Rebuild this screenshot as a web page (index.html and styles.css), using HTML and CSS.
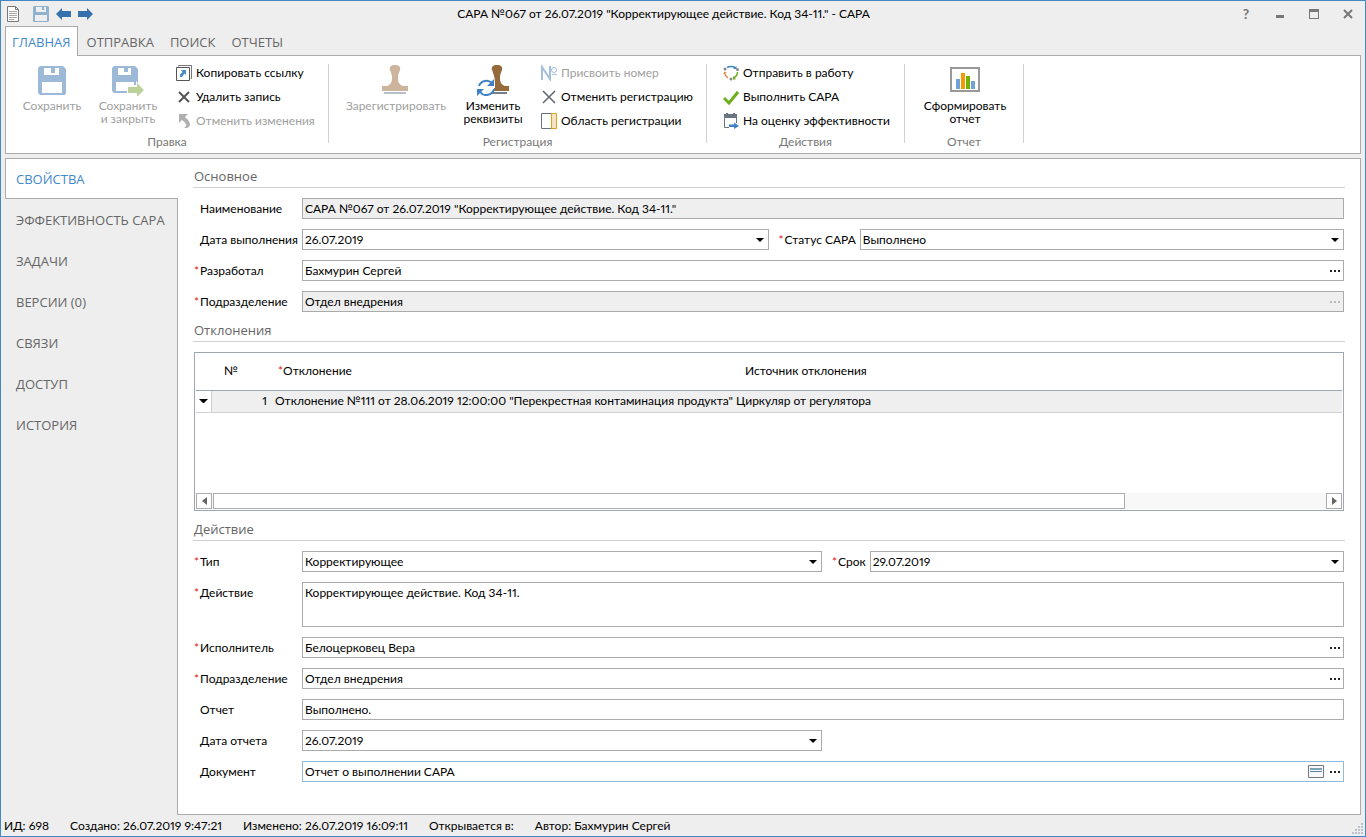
FILE: index.html
```html
<!DOCTYPE html>
<html lang="ru">
<head>
  <meta charset="UTF-8" />
  <meta name="viewport" content="width=device-width, initial-scale=1.0"/>
  <title>САРА №067 от 26.07.2019</title>
  <link rel="stylesheet" href="styles.css">
</head>
<body>
  <header class="titlebar">
    <div class="quick">
      <svg class="doc-icon" width="14" height="18" viewBox="0 0 14 18"><path d="M1.500 1.500h8l3 3v12h-11z" fill="#fff" stroke="#777"/><path d="M9.500 1.500v3h3" fill="none" stroke="#777"/><path d="M3 6.500h8M3 8.500h8M3 10.500h8M3 12.500h8M3 14.500h5" stroke="#aaa"/></svg>
      <button aria-label="Сохранить"><svg width="16" height="16" viewBox="0 0 16 16"><path d="M0 1l1-1h14l1 1v14l-1 1H1l-1-1z" fill="#8fb2d1"/><path d="M3 1h10v5H3zM2 9h12v6H2z" fill="#eee"/><path d="M9 1h2v3H9z" fill="#8fb2d1"/></svg></button>
      <button aria-label="Назад"><svg width="15" height="12" viewBox="0 0 15 12"><path d="M0 6l6-6v3h9v6H6v3z" fill="#3572ab"/></svg></button>
      <button aria-label="Вперед"><svg width="15" height="12" viewBox="0 0 15 12"><path d="M15 6L9 0v3H0v6h9v3z" fill="#3572ab"/></svg></button>
    </div>
    <h1>САРА №067 от 26.07.2019 "Корректирующее действие. Код 34-11." - САРА</h1>
    <div class="window-buttons">
      <button class="help">?</button>
      <button aria-label="Свернуть"><svg width="10" height="10"><path d="M1 6h8v3H1z" fill="#777"/></svg></button>
      <button aria-label="Развернуть"><svg width="10" height="10"><path d="M0 0h10v10H0zM1 3v6h8V3z" fill="#777" fill-rule="evenodd"/></svg></button>
      <button aria-label="Закрыть"><svg width="10" height="10"><path d="M1 1l8 8M9 1L1 9" stroke="#777" stroke-width="2"/></svg></button>
    </div>
  </header>

  <nav class="tabs">
    <a href="#" class="active">ГЛАВНАЯ</a>
    <a href="#">ОТПРАВКА</a>
    <a href="#">ПОИСК</a>
    <a href="#">ОТЧЕТЫ</a>
  </nav>

  <div class="ribbon">
    <section class="group group-edit">
      <div class="tools">
        <button class="big" disabled>
          <svg width="30" height="32" viewBox="0 0 30 32"><path d="M1 4l2-2h23l3 3v24l-1 2H3l-2-2z" fill="#9cbad8"/><path d="M7 4h15v7H7zM5 18h20v11H5z" fill="#fff"/><path d="M14 4h4v5h-4z" fill="#9cbad8"/></svg>
          <span>Сохранить</span>
        </button>
        <button class="big" disabled>
          <svg width="34" height="32" viewBox="0 0 34 32"><path d="M1 4l2-2h21l3 3v24H3l-2-2z" fill="#9cbad8"/><path d="M7 4h13v7H7zM5 18h18v9H5z" fill="#fff"/><path d="M13 4h4v4h-4z" fill="#9cbad8"/><path d="M16 21h9v-4l9 9-9 7v-3h-9z" fill="#fff"/><path d="M17 23h9v-4l7 7-7 7v-4h-9z" fill="#bdd19b"/></svg>
          <span>Сохранить<br>и закрыть</span>
        </button>
        <div class="list">
          <button><svg width="16" height="16" viewBox="0 0 16 16"><path d="M2.500 1.500V.5h13v13h-1" fill="none" stroke="#777"/><path d="M.5 2.500h13v13H.5z" fill="#fff" stroke="#555"/><path d="M5 5h5v5L8.500 8.500 6 12H4V9.500L6.500 7z" fill="#4a8bc4"/></svg>Копировать ссылку</button>
          <button><svg width="16" height="16" viewBox="0 0 16 16"><path d="M3 3l10 10M13 3L3 13" stroke="#555" stroke-width="2"/></svg>Удалить запись</button>
          <button disabled><svg width="16" height="16" viewBox="0 0 16 16"><path d="M3 1h9L9 4q5 4 5 8-1 3-4 3H8q3-2 2-4-1-2-4-4l-3 3z" fill="#b0b0b0"/></svg>Отменить изменения</button>
        </div>
      </div>
      <h2>Правка</h2>
    </section>

    <section class="group group-reg">
      <div class="tools">
        <button class="big wide" disabled>
          <svg width="30" height="32" viewBox="0 0 30 32"><path d="M14 1c4 0 6 2 5 5-1 3-2 4-2 8 0 5 2 7 5 8h5v5H1v-5h5c3-1 5-3 5-8 0-4-1-5-2-8-1-3 1-5 5-5z" fill="#cdb49c"/><path d="M3 28h22v2H3z" fill="#b9bfc5"/></svg>
          <span>Зарегистрировать</span>
        </button>
        <button class="big">
          <svg width="34" height="32" viewBox="0 0 34 32"><path d="M21 1c4 0 6 2 5 5-1 3-2 4-2 8 0 5 2 7 5 8h4v5H18v-9c1-2 1-3 0-6s-1-4-2-6c-1-3 1-5 5-5z" fill="#956a3c"/><path d="M16 28h15v2H16z" fill="#75808d"/><path d="M1 22a9 9 0 0 1 16-4l2-2v8h-8l2-3a6 6 0 0 0-8 2M18 23a9 9 0 0 1-16 5l-1 3v-8h8l-3 3a6 6 0 0 0 9-2z" fill="#fff"/><path d="M3 22a8 8 0 0 1 13-3M18 25a8 8 0 0 1-14 3" fill="none" stroke="#3d82c4" stroke-width="2"/><path d="M18 15v7h-7zM1 32v-7h7z" fill="#3d82c4"/></svg>
          <span>Изменить<br>реквизиты</span>
        </button>
        <div class="list">
          <button disabled><svg width="16" height="16" viewBox="0 0 16 16"><path d="M1 15V2l8 12V1" fill="none" stroke="#a3bfdb" stroke-width="2"/><circle cx="13" cy="5" r="2.500" fill="none" stroke="#a3bfdb"/><path d="M11 9.500h5" stroke="#a3bfdb"/></svg>Присвоить номер</button>
          <button><svg width="16" height="16" viewBox="0 0 16 16"><path d="M2 2l12 12M14 2L2 14" stroke="#5c6670" stroke-width="1.500"/></svg>Отменить регистрацию</button>
          <button><svg width="16" height="16" viewBox="0 0 16 16"><path d="M.5.5h10v15H.5z" fill="#fff" stroke="#687380"/><path d="M10.500.5h5v15h-5z" fill="#f4e3c4" stroke="#d9a520"/></svg>Область регистрации</button>
        </div>
      </div>
      <h2>Регистрация</h2>
    </section>

    <section class="group group-actions">
      <div class="tools">
        <div class="list">
          <button><svg width="16" height="16" viewBox="0 0 16 16"><path d="M4 2.500q4-2 8 0" fill="none" stroke="#3d82c4" stroke-width="1.500"/><path d="M13.500 1v3H10z" fill="#3d82c4"/><path d="M14.500 7q0 4-4 6" fill="none" stroke="#6bac1e" stroke-width="1.500"/><path d="M10 11v3.500h3z" fill="#6bac1e"/><path d="M5 13q-3-2-3.500-5" fill="none" stroke="#e08a4a" stroke-width="1.500"/><path d="M0 9l1.500-2.500L4 8z" fill="#e08a4a"/><circle cx="2" cy="4" r="1.500" fill="#888"/><circle cx="14.500" cy="4.500" r="1.500" fill="#888"/><circle cx="8" cy="14" r="1.500" fill="#888"/></svg>Отправить в работу</button>
          <button><svg width="16" height="16" viewBox="0 0 16 16"><path d="M1 9l5 5L15 3" fill="none" stroke="#6fae1f" stroke-width="3"/></svg>Выполнить САРА</button>
          <button><svg width="16" height="16" viewBox="0 0 16 16"><path d="M1.500 2v12.500H6M13.500 2v8" fill="none" stroke="#6b7580"/><path d="M1 1h2V0h2v1h5V0h2v1h2v4H1z" fill="#6b7580"/><path d="M6 11.500h5V9.500l5 3.500-5 3v-2H6z" fill="#3d82c4"/></svg>На оценку эффективности</button>
        </div>
      </div>
      <h2>Действия</h2>
    </section>

    <section class="group group-report">
      <div class="tools">
        <button class="big wide">
          <svg width="32" height="32" viewBox="0 0 32 32"><path d="M2 4h28v23H2z" fill="#fff" stroke="#999" stroke-width="2"/><path d="M7 15h4v10H7zM22 17h4v8h-4z" fill="#6fa5d6"/><path d="M12 9h4v16h-4z" fill="#f59a00"/><path d="M17 12h4v13h-4z" fill="#73b000"/></svg>
          <span>Сформировать<br>отчет</span>
        </button>
      </div>
      <h2>Отчет</h2>
    </section>
  </div>

  <div class="workspace">
    <nav class="side">
      <a href="#" class="active">СВОЙСТВА</a>
      <a href="#">ЭФФЕКТИВНОСТЬ САРА</a>
      <a href="#">ЗАДАЧИ</a>
      <a href="#">ВЕРСИИ (0)</a>
      <a href="#">СВЯЗИ</a>
      <a href="#">ДОСТУП</a>
      <a href="#">ИСТОРИЯ</a>
    </nav>

    <main class="content">
      <h3>Основное</h3>
      <div class="row">
        <label for="name"><i></i>Наименование</label>
        <div class="field readonly"><input id="name" type="text" value='САРА №067 от 26.07.2019 "Корректирующее действие. Код 34-11."' readonly></div>
      </div>
      <div class="row">
        <label for="doneDate"><i></i>Дата выполнения</label>
        <div class="field date"><select id="doneDate"><option>26.07.2019</option></select></div>
        <label for="status" class="second"><i>*</i>Статус САРА</label>
        <div class="field"><select id="status"><option>Выполнено</option></select></div>
      </div>
      <div class="row">
        <label for="author"><i>*</i>Разработал</label>
        <div class="field"><input id="author" type="text" value="Бахмурин Сергей"><button class="dots" aria-label="Выбрать"></button></div>
      </div>
      <div class="row">
        <label for="dept"><i>*</i>Подразделение</label>
        <div class="field readonly"><input id="dept" type="text" value="Отдел внедрения" readonly><button class="dots" aria-label="Выбрать" disabled></button></div>
      </div>

      <h3>Отклонения</h3>
      <div class="grid">
        <table>
          <thead>
            <tr><th class="mark"></th><th class="num">№</th><th class="deviation"><i>*</i>Отклонение</th><th>Источник отклонения</th></tr>
          </thead>
          <tbody>
            <tr><td class="mark"><span class="caret"></span></td><td class="num">1</td><td>Отклонение №111 от 28.06.2019 12:00:00 "Перекрестная контаминация продукта"</td><td>Циркуляр от регулятора</td></tr>
          </tbody>
        </table>
        <div class="scrollbar">
          <button aria-label="Влево"><svg width="5" height="8"><path d="M5 0v8L0 4z" fill="#666"/></svg></button>
          <div class="track"><div class="thumb"></div></div>
          <button aria-label="Вправо"><svg width="5" height="8"><path d="M0 0v8l5-4z" fill="#666"/></svg></button>
        </div>
      </div>

      <h3>Действие</h3>
      <div class="row">
        <label for="type"><i>*</i>Тип</label>
        <div class="field half"><select id="type"><option>Корректирующее</option></select></div>
        <label for="term" class="second"><i>*</i>Срок</label>
        <div class="field"><select id="term"><option>29.07.2019</option></select></div>
      </div>
      <div class="row">
        <label for="action"><i>*</i>Действие</label>
        <div class="field tall"><textarea id="action">Корректирующее действие. Код 34-11.</textarea></div>
      </div>
      <div class="row">
        <label for="performer"><i>*</i>Исполнитель</label>
        <div class="field"><input id="performer" type="text" value="Белоцерковец Вера"><button class="dots" aria-label="Выбрать"></button></div>
      </div>
      <div class="row">
        <label for="performerDept"><i>*</i>Подразделение</label>
        <div class="field"><input id="performerDept" type="text" value="Отдел внедрения"><button class="dots" aria-label="Выбрать"></button></div>
      </div>
      <div class="row">
        <label for="report"><i></i>Отчет</label>
        <div class="field"><input id="report" type="text" value="Выполнено."></div>
      </div>
      <div class="row">
        <label for="reportDate"><i></i>Дата отчета</label>
        <div class="field half"><select id="reportDate"><option>26.07.2019</option></select></div>
      </div>
      <div class="row">
        <label for="document"><i></i>Документ</label>
        <div class="field focused">
          <input id="document" type="text" value="Отчет о выполнении САРА">
          <button class="card" aria-label="Открыть карточку"><svg width="16" height="13" viewBox="0 0 16 13"><path d="M.5.5h15v12H.5z" fill="#f8f8ff" stroke="#777"/><path d="M2 3h12v2H2z" fill="#78a5b5"/><path d="M2 6h12v1H2z" fill="#6080a5"/></svg></button>
          <button class="dots" aria-label="Выбрать"></button>
        </div>
      </div>
    </main>
  </div>

  <footer class="status">
    <span>ИД: 698</span>
    <span>Создано: 26.07.2019 9:47:21</span>
    <span>Изменено: 26.07.2019 16:09:11</span>
    <span>Открывается в:</span>
    <span>Автор: Бахмурин Сергей</span>
    <svg class="grip" width="12" height="12"><path d="M9 0h2v2H9zM6 3h2v2H6zM9 3h2v2H9zM3 6h2v2H3zM6 6h2v2H6zM9 6h2v2H9zM0 9h2v2H0zM3 9h2v2H3zM6 9h2v2H6zM9 9h2v2H9z" fill="#bcc3d0"/></svg>
  </footer>
</body>
</html>
```
FILE: styles.css
```css
:root {
  --frame: #4387c3;
  --bg: #eeeeee;
  --line: #ababab;
  --accent: #3f88c9;
  --gray: #666;
  --disabled: #a0a0a0;
}

* {
  box-sizing: border-box;
}

body {
  margin: 0;
  min-height: 100vh;
  display: flex;
  flex-direction: column;
  border: 1px solid var(--frame);
  background: var(--bg);
  color: #000;
  font-family: Lato, "Open Sans", sans-serif;
  font-size: 12px;
  font-variant-numeric: proportional-nums;
  line-height: 16px;
}

button, input, select, textarea {
  font: inherit;
  color: inherit;
  margin: 0;
  padding: 0;
  border: none;
  background: none;
  outline: none;
}

a {
  text-decoration: none;
  color: var(--gray);
}

i {
  font-style: normal;
  color: #e02020;
}

svg {
  display: block;
  flex: none;
}

/* title bar */
.titlebar {
  display: flex;
  align-items: center;
  height: 25px;
}

.quick {
  display: flex;
  align-items: center;
  gap: 7px;
  width: 97px;
  padding-left: 5px;
}

.doc-icon {
  margin-right: 6px;
}

.titlebar h1 {
  flex: 1;
  margin: 0;
  text-align: center;
  font-size: 12px;
  font-weight: normal;
}

.window-buttons {
  display: flex;
}

.window-buttons button {
  display: flex;
  align-items: center;
  justify-content: center;
  width: 34px;
  height: 24px;
  color: #777;
}

.window-buttons .help {
  font-size: 14px;
  font-weight: bold;
}

/* ribbon */
.tabs {
  display: flex;
  padding-left: 4px;
  font-family: "Open Sans", sans-serif;
  font-size: 13px;
  line-height: 32px;
}

.tabs a {
  height: 29px;
  padding: 0 8px;
}

.tabs .active {
  position: relative;
  height: 30px;
  margin-bottom: -1px;
  padding: 0 6px;
  margin-right: 1px;
  border: 1px solid var(--line);
  border-bottom: none;
  background: #fff;
  color: var(--accent);
  line-height: 30px;
}

.ribbon {
  display: flex;
  height: 99px;
  margin: 0 4px;
  padding: 8px 0 10px;
  border: 1px solid var(--line);
  background: #fff;
}

.group {
  display: flex;
  flex-direction: column;
  border-right: 1px solid #d0d0d0;
}

.group-edit {
  width: 323px;
}

.group-reg {
  width: 378px;
}

.group-actions {
  width: 198px;
}

.group-report {
  width: 119px;
}

.tools {
  display: flex;
  flex: none;
  height: 70px;
  padding-left: 8px;
}

.group-actions .tools {
  padding-left: 6px;
}

.group-report .tools {
  padding-left: 2px;
}

.group h2 {
  margin: 0;
  text-align: center;
  color: #777;
  font-size: 12px;
  font-weight: normal;
}

.big {
  display: flex;
  flex-direction: column;
  align-items: center;
  gap: 3px;
  width: 76px;
  line-height: 13px;
  white-space: nowrap;
}

.big.wide {
  width: 118px;
}

.list {
  display: flex;
  flex-direction: column;
  margin-left: 10px;
}

.list button {
  display: flex;
  align-items: center;
  flex: none;
  gap: 4px;
  height: 24px;
  padding-bottom: 6px;
  white-space: nowrap;
}

button:disabled {
  color: var(--disabled);
}

/* side tabs and form */
.workspace {
  flex: 1;
  display: flex;
  margin: 4px 4px 0;
}

.side {
  display: flex;
  flex-direction: column;
  width: 173px;
  font-family: "Open Sans", sans-serif;
  font-size: 13px;
}

.side::after {
  content: "";
  flex: 1;
  border-right: 1px solid var(--line);
}

.side a {
  height: 41px;
  padding-left: 11px;
  border-right: 1px solid var(--line);
  line-height: 42px;
  white-space: nowrap;
}

.side .active {
  padding-left: 10px;
  border: 1px solid var(--line);
  border-right: none;
  background: #fff;
  color: var(--accent);
  line-height: 40px;
}

.content {
  flex: 1;
  min-width: 0;
  padding: 8px 16px 20px;
  border: 1px solid var(--line);
  border-left: none;
  background: #fff;
}

.content h3 {
  margin: 0 -1px 10px;
  padding-left: 1px;
  height: 21px;
  border-bottom: 1px solid #d0d0d0;
  color: var(--gray);
  font-family: "Open Sans", sans-serif;
  font-size: 13px;
  font-weight: normal;
  line-height: 18px;
}

.row {
  display: flex;
  margin-bottom: 10px;
}

.row + h3,
.grid + h3 {
  margin-top: -1px;
}

.row label {
  width: 108px;
  flex: none;
  line-height: 21px;
  white-space: nowrap;
}

.row label.second {
  width: auto;
  padding: 0 4px 0 10px;
}

.row i {
  display: inline-block;
  width: 6px;
}

.field {
  flex: 1;
  display: flex;
  align-items: center;
  height: 21px;
  min-width: 0;
  padding-left: 2px;
  border: 1px solid var(--line);
  background: #fff;
}

.field.half {
  flex: none;
  width: calc(50% - 55px);
}

.field.date {
  flex: none;
  width: calc(45% - 51px);
}

.field.tall {
  height: 45px;
}

.field.readonly {
  background: #efefef;
}

.field.focused {
  border-color: #92bbd9;
}

.field input,
.field select,
.field textarea {
  flex: 1;
  min-width: 0;
  height: 100%;
  appearance: none;
}

.field textarea {
  padding-top: 2px;
  resize: none;
}

.caret,
.field:has(select)::after {
  content: "";
  border: 4px solid transparent;
  border-top-color: #000;
  border-bottom: none;
}

.field:has(select)::after {
  margin-right: 4px;
}

.dots {
  width: 10px;
  height: 2px;
  margin-right: 3px;
  color: #222;
  background: repeating-linear-gradient(90deg, currentColor 0 2px, transparent 2px 4px);
}

.dots:disabled {
  color: #bbb;
}

.card {
  margin-right: 6px;
}

/* deviations */
.grid {
  display: flex;
  flex-direction: column;
  justify-content: space-between;
  height: 159px;
  margin-bottom: 10px;
  padding: 0 1px 1px;
  border: 1px solid #a0a6b0;
}

.grid table {
  width: 100%;
  border-collapse: collapse;
  table-layout: fixed;
  white-space: nowrap;
}

.grid th {
  height: 37px;
  padding: 0 13px;
  border-bottom: 1px solid #a0a6b0;
  font-weight: normal;
  text-align: left;
}

.grid td {
  height: 22px;
  padding: 0 4px;
  border-bottom: 1px solid #d0d0d0;
  background: #efefef;
}

.grid th.mark,
.grid td.mark {
  width: 15px;
  padding: 0 3px;
}

.grid td.mark {
  border-right: 1px solid #d0d0d0;
  background: #fff;
}

.caret {
  display: block;
}

.grid th.num {
  width: 60px;
}

.grid td.num {
  text-align: right;
}

.grid th.deviation {
  width: 461px;
  padding-left: 7px;
}

.scrollbar {
  display: flex;
  gap: 1px;
  height: 16px;
  background: #f8f8f8;
}

.scrollbar button {
  display: flex;
  align-items: center;
  justify-content: center;
  width: 16px;
  border: 1px solid var(--line);
  background: #fff;
}

.track {
  flex: 1;
}

.thumb {
  width: 82%;
  height: 16px;
  border: 1px solid var(--line);
  background: #fff;
}

/* status bar */
.status {
  display: flex;
  gap: 21px;
  height: 21px;
  padding-left: 3px;
  line-height: 21px;
}

.grip {
  align-self: flex-end;
  margin: 0 1px 1px auto;
}
```
